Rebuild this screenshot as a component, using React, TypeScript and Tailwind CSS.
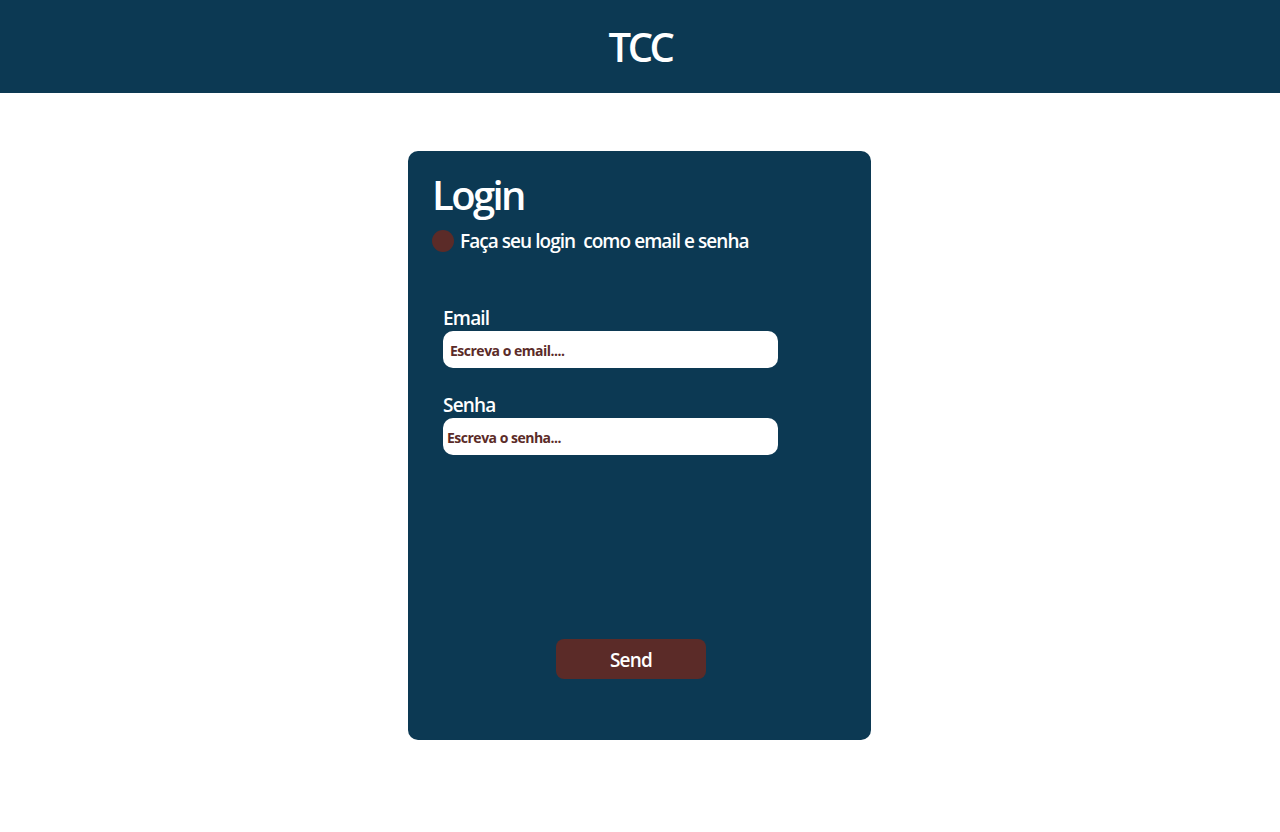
export default function App() {
  return (
    <main
      className="min-h-screen bg-white"
      style={{ fontFamily: '"Open Sans", "Noto Sans", sans-serif' }}
    >
      <header className="flex h-[93px] items-center justify-center bg-[#0c3953]">
        <h1 className="text-[40px] font-semibold tracking-[-3.5px] text-white">TCC</h1>
      </header>

      <section className="flex justify-center pt-[58px]">
        <div className="ml-[-1px] flex h-[589px] w-[463px] flex-col rounded-[10px] bg-[#0c3953] px-6 pt-[20px]">
          <h2 className="text-[40px] font-semibold leading-[48px] tracking-[-2.6px] text-white">Login</h2>
          <div className="mt-[8px] flex items-center gap-[6px]">
            <span className="h-[22px] w-[22px] rounded-full bg-[#5b2b28]" />
            <p className="text-[19px] font-semibold tracking-[-0.95px] text-white">
              Faça seu login&nbsp; como email e senha
            </p>
          </div>

          {/* campos */}
          <form className="mt-[53px] flex flex-col px-[11px]">
            <label className="text-[19px] font-semibold leading-[18px] tracking-[-0.8px] text-white">Email</label>
            <div className="mt-[4px] flex h-[37px] w-[335px] items-center rounded-[10px] bg-white px-[7px] pt-[3px]">
              <span className="text-[14px] font-bold tracking-[-0.5px] text-[#5b2b28]">Escreva o email....</span>
            </div>
            <label className="mt-[28px] text-[19px] font-semibold leading-[18px] tracking-[-0.8px] text-white">Senha</label>
            <div className="mt-[4px] flex h-[37px] w-[335px] items-center rounded-[10px] bg-white px-[4px] pt-[3px]">
              <span className="text-[14px] font-bold tracking-[-0.5px] text-[#5b2b28]">Escreva o senha...</span>
            </div>
          </form>

          <div className="mt-[184px] flex justify-center pr-[17px]">
            <button className="h-[40px] w-[150px] rounded-[8px] bg-[#5b2b28] pt-[4px] text-[19px] font-semibold tracking-[-0.8px] text-white">
              Send
            </button>
          </div>
        </div>
      </section>
    </main>
  );
}
